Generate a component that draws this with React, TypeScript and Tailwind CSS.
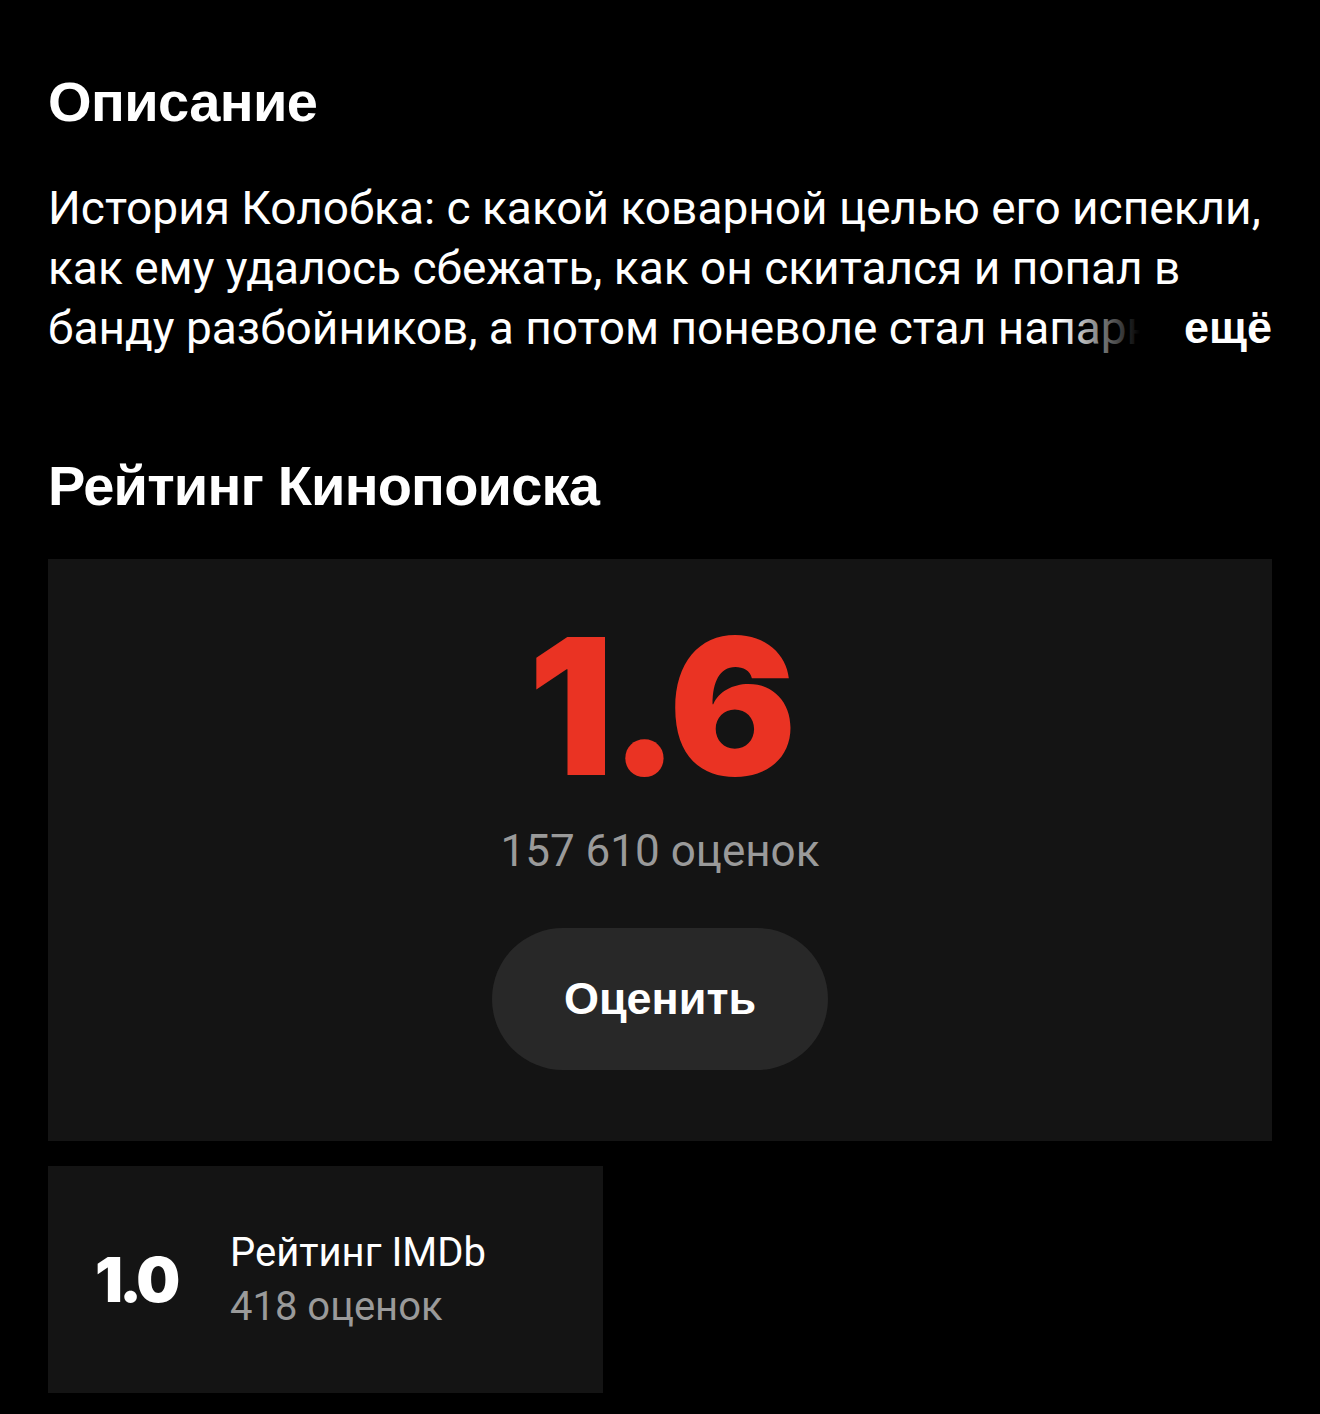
import React from "react";

export default function App() {
  return (
    <div className="min-h-[1414px] w-[1320px] bg-black px-[48px] pt-[70px] text-white" style={{ fontFamily: "Roboto, 'Liberation Sans', sans-serif" }}>
      <h2 className="text-[56px] font-bold leading-[64px] tracking-[-0.6px]" style={{ fontFamily: "'Liberation Sans', Arial, sans-serif" }}>Описание</h2>
      <div className="relative mt-[44px] h-[180px] overflow-hidden text-[46px] leading-[60px]">
        <p>
          История Колобка: с какой коварной целью его испекли, как ему удалось сбежать, как он скитался и попал в банду разбойников, а потом поневоле стал напарником лисы и чем всё это закончилось.
        </p>
        <div className="absolute bottom-0 right-0 flex h-[60px] items-center">
          <div className="h-full w-[80px] bg-gradient-to-r from-transparent to-black" />
          <span className="bg-black pl-[44px] text-[45px] font-bold" style={{ fontFamily: "'Liberation Sans', Arial, sans-serif" }}>ещё</span>
        </div>
      </div>
      <h2 className="mt-[96px] text-[56px] font-bold leading-[64px] tracking-[-0.8px]" style={{ fontFamily: "'Liberation Sans', Arial, sans-serif" }}>Рейтинг Кинопоиска</h2>
      <div className="mt-[41px] flex h-[582px] flex-col items-center bg-[#141414] pt-[62px]">
        <div className="text-[190px] font-black leading-[170px] tracking-[-5px] text-[#ea3323]" style={{ fontFamily: "Inter, 'Liberation Sans', sans-serif" }}>1.6</div>
        <div className="mt-[34px] text-[44px] leading-[52px] text-[#9a9a9a]">157 610 оценок</div>
        <button className="mt-[51px] flex h-[142px] w-[336px] items-center justify-center rounded-full bg-[#282828] text-[45px] font-bold text-white" style={{ fontFamily: "'Liberation Sans', Arial, sans-serif" }}>Оценить</button>
      </div>
      <div className="mt-[25px] flex h-[227px] w-[555px] items-center bg-[#141414] pl-[47px]">
        <div className="w-[135px] text-[62px] font-black tracking-[-4px]" style={{ fontFamily: "Inter, 'Liberation Sans', sans-serif" }}>1.0</div>
        <div className="flex flex-col">
          <span className="text-[40px] leading-[54px]">Рейтинг IMDb</span>
          <span className="text-[40px] leading-[54px] text-[#9a9a9a]">418 оценок</span>
        </div>
      </div>
    </div>
  );
}
